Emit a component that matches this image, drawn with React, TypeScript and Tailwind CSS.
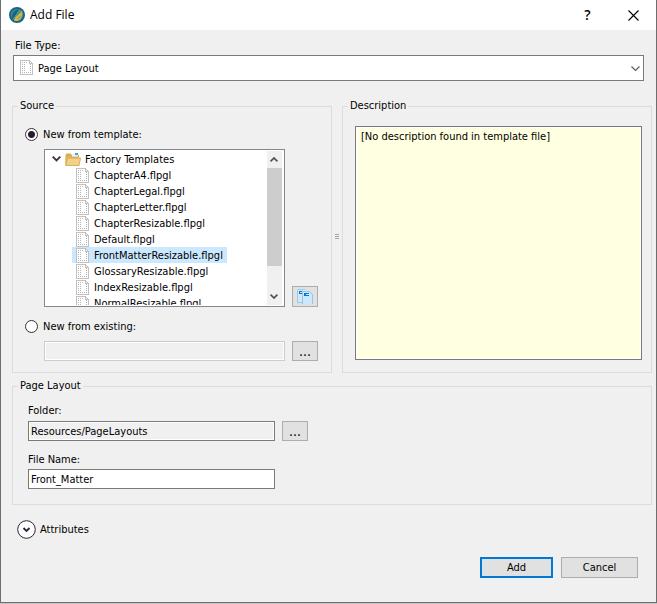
import { ReactNode, useState } from 'react'

const TEMPLATES = [
  'ChapterA4.flpgl',
  'ChapterLegal.flpgl',
  'ChapterLetter.flpgl',
  'ChapterResizable.flpgl',
  'Default.flpgl',
  'FrontMatterResizable.flpgl',
  'GlossaryResizable.flpgl',
  'IndexResizable.flpgl',
  'NormalResizable.flpgl',
]

type SourceMode = 'template' | 'existing'

export default function App() {
  const [mode, setMode] = useState<SourceMode>('template')
  const [selected, setSelected] = useState('FrontMatterResizable.flpgl')
  const [fileName, setFileName] = useState('Front_Matter')

  return (
    <div className="min-h-screen bg-[#c3c3c3] pb-px font-['DejaVu_Sans_Condensed','DejaVu_Sans',sans-serif] text-[11px] leading-[14px] text-black">
      <div className="flex min-h-[calc(100vh-1px)] flex-col border border-t-0 border-[#6e6e6e] bg-[#f0f0f0]">
        <TitleBar />
        <main className="flex flex-1 flex-col pt-[9px]">
          <div className="px-3">
            <label htmlFor="file-type" className="block pl-0.5">
              File Type:
            </label>
            <FileTypeSelect />
          </div>

          <div className="mt-[18px] flex pr-1 pl-[11px]">
            <GroupBox title="Source" className="flex-[320]">
              <div className="pt-[14px] pr-[13px] pb-[11px] pl-3">
                <SourceRadio
                  id="from-template"
                  label="New from template:"
                  checked={mode === 'template'}
                  onChange={() => setMode('template')}
                />
                <div className="mt-[7px] flex items-end gap-[7px] pl-[19px]">
                  <TemplateTree selected={selected} onSelect={setSelected} />
                  <SmallButton label="Browse template folder">
                    <TemplatesIcon />
                  </SmallButton>
                </div>
                <div className="mt-3">
                  <SourceRadio
                    id="from-existing"
                    label="New from existing:"
                    checked={mode === 'existing'}
                    onChange={() => setMode('existing')}
                  />
                </div>
                <div className="mt-[7px] flex gap-[7px] pl-[19px]">
                  <input
                    type="text"
                    aria-label="Existing file"
                    disabled={mode !== 'existing'}
                    className="h-5 min-w-0 flex-1 border border-[#ccc] bg-[#f0f0f0] px-0.5 outline-1 -outline-offset-2 outline-white"
                  />
                  <SmallButton label="Browse existing file">
                    <Dots />
                  </SmallButton>
                </div>
              </div>
            </GroupBox>

            <div className="flex w-[10px] flex-col items-center justify-center gap-px">
              <span className="h-px w-1 bg-[#a6a6a6]" />
              <span className="h-px w-1 bg-[#a6a6a6]" />
              <span className="h-px w-1 bg-[#a6a6a6]" />
            </div>

            <GroupBox title="Description" className="flex flex-[310] flex-col">
              <div className="flex flex-1 flex-col pt-[13px] pr-[9px] pb-3 pl-3">
                <textarea
                  readOnly
                  aria-label="Description"
                  defaultValue="[No description found in template file]"
                  className="w-full flex-1 resize-none border border-[#7a7a7a] bg-[#ffffe1] px-[5px] py-[3px] outline-1 -outline-offset-2 outline-white"
                />
              </div>
            </GroupBox>
          </div>

          <div className="mt-[6px] pr-1 pl-[11px]">
            <GroupBox title="Page Layout">
              <div className="px-[15px] pt-[11px] pb-[15px]">
                <label htmlFor="folder" className="block">
                  Folder:
                </label>
                <div className="mt-[3px] flex items-center gap-[7px]">
                  <input
                    id="folder"
                    type="text"
                    readOnly
                    defaultValue="Resources/PageLayouts"
                    className="h-5 w-[247px] border border-[#7a7a7a] bg-[#f0f0f0] px-0.5 outline-1 -outline-offset-2 outline-white"
                  />
                  <SmallButton label="Browse folder">
                    <Dots />
                  </SmallButton>
                </div>
                <label htmlFor="file-name" className="mt-3 block">
                  File Name:
                </label>
                <input
                  id="file-name"
                  type="text"
                  value={fileName}
                  onChange={(e) => setFileName(e.target.value)}
                  className="mt-0.5 block h-5 w-[247px] border border-[#7a7a7a] bg-white px-0.5 outline-none"
                />
              </div>
            </GroupBox>
          </div>

          <button type="button" className="mt-[15px] ml-4 flex items-center gap-1 self-start">
            <svg width="19" height="19" viewBox="0 0 19 19" fill="none">
              <circle cx="9.5" cy="9.5" r="8.8" fill="#fff" stroke="#2d2438" />
              <path d="M6.5 8l3 3 3-3" stroke="#2d2438" strokeWidth="1.8" />
            </svg>
            Attributes
          </button>

          <div className="mt-auto flex justify-end gap-2 pt-4 pr-[18px] pb-6">
            <button type="button" className="h-[21px] w-[73px] border-2 border-[#0078d7] bg-[#e1e1e1]">
              Add
            </button>
            <button type="button" className="h-[21px] w-[77px] border border-[#adadad] bg-[#e1e1e1]">
              Cancel
            </button>
          </div>
        </main>
      </div>
    </div>
  )
}

function TitleBar() {
  return (
    <header className="flex h-[30px] items-center bg-white pl-2">
      <AppIcon />
      <h1 className="ml-[5px] flex-1 font-['Open_Sans',sans-serif] text-xs leading-4">Add File</h1>
      <button
        type="button"
        aria-label="Help"
        className="flex h-full w-[45px] items-center justify-center font-['Open_Sans',sans-serif] text-sm font-semibold"
      >
        ?
      </button>
      <button type="button" aria-label="Close" className="flex h-full w-[46px] items-center justify-center">
        <svg width="11" height="11" viewBox="0 0 11 11" stroke="#000" strokeWidth="1.1">
          <path d="M.5.5l10 10M10.5.5l-10 10" />
        </svg>
      </button>
    </header>
  )
}

function FileTypeSelect() {
  return (
    <div className="relative mt-0.5">
      <select
        id="file-type"
        className="block h-[26px] w-full appearance-none border border-[#7a7a7a] bg-white pt-0.5 pr-6 pl-6 outline-none"
      >
        <option>Page Layout</option>
      </select>
      <span className="pointer-events-none absolute top-[5px] left-[7px]">
        <PageIcon />
      </span>
      <svg
        className="pointer-events-none absolute top-[11px] right-1"
        width="9"
        height="6"
        viewBox="0 0 9 6"
        fill="none"
        stroke="#606060"
        strokeWidth="1.2"
      >
        <path d="M.5.5l4 4 4-4" />
      </svg>
    </div>
  )
}

function GroupBox({ title, className = '', children }: { title: string; className?: string; children: ReactNode }) {
  return (
    <fieldset className={`min-w-0 border border-[#dcdcdc] ${className}`}>
      <legend className="ml-[5px] px-0.5">{title}</legend>
      {children}
    </fieldset>
  )
}

function SourceRadio({
  id,
  label,
  checked,
  onChange,
}: {
  id: string
  label: string
  checked: boolean
  onChange: () => void
}) {
  return (
    <div className="flex items-center gap-[5px]">
      <input
        id={id}
        type="radio"
        name="source"
        checked={checked}
        onChange={onChange}
        className="size-[13px] appearance-none rounded-full border border-[#333] bg-white checked:bg-[radial-gradient(circle,#2a1a2e_0_3px,#fff_4px)]"
      />
      <label htmlFor={id} className="pt-px">
        {label}
      </label>
    </div>
  )
}

function TemplateTree({ selected, onSelect }: { selected: string; onSelect: (name: string) => void }) {
  return (
    <div className="flex h-[158px] min-w-0 flex-1 border border-[#828790] bg-white p-px">
      <div role="tree" aria-label="Templates" className="min-w-0 flex-1 overflow-hidden">
        <div role="treeitem" aria-expanded="true" className="flex h-4 items-center pl-[6px]">
          <svg width="9" height="6" viewBox="0 0 9 6" fill="none" stroke="#40333f" strokeWidth="1.9">
            <path d="M.7.7l3.800 3.800L8.300.7" />
          </svg>
          <span className="ml-1">
            <FolderIcon />
          </span>
          <span className="ml-1 pt-0.5">Factory Templates</span>
        </div>
        {TEMPLATES.map((name) => (
          <button
            key={name}
            type="button"
            role="treeitem"
            aria-selected={name === selected}
            onClick={() => onSelect(name)}
            className={`ml-[26px] flex h-4 items-center gap-[5px] pr-1 pl-1 whitespace-nowrap ${
              name === selected ? 'bg-[#cce8ff]' : ''
            }`}
          >
            <PageIcon />
            <span className="pt-0.5">{name}</span>
          </button>
        ))}
      </div>
      <div className="mr-px flex w-[15px] flex-col items-center bg-[#f0f0f0]">
        <svg className="my-[6px]" width="8" height="5" viewBox="0 0 8 5" fill="none" stroke="#505050" strokeWidth="1.7">
          <path d="M.6 4.4L4 1l3.4 3.4" />
        </svg>
        <div className="h-[98px] w-full bg-[#cdcdcd]" />
        <svg
          className="mt-auto mb-[6px]"
          width="8"
          height="5"
          viewBox="0 0 8 5"
          fill="none"
          stroke="#505050"
          strokeWidth="1.7"
        >
          <path d="M.6.6L4 4 7.4.6" />
        </svg>
      </div>
    </div>
  )
}

function SmallButton({ label, children }: { label: string; children: ReactNode }) {
  return (
    <button
      type="button"
      aria-label={label}
      className="flex min-h-5 w-[26px] shrink-0 items-center justify-center border border-[#adadad] bg-[#e1e1e1]"
    >
      {children}
    </button>
  )
}

function Dots() {
  return <span className="text-sm leading-4">...</span>
}

function PageIcon() {
  return (
    <svg className="shrink-0" width="13" height="15" viewBox="0 0 13 15" fill="none" shapeRendering="crispEdges">
      <path d="M.5.5h9l3 3v11H.5z" fill="#fff" stroke="#c0c0c0" />
      <path d="M9.500 0v3.500h3" stroke="#c0c0c0" />
      <path d="M2 2.500h6M2 12.500h9" stroke="#b4b4b4" strokeDasharray="1 1" />
      <path d="M2.500 2v11M4.500 4v9M10.500 4v9" stroke="#b4b4b4" strokeDasharray="1 1" />
    </svg>
  )
}

function FolderIcon() {
  return (
    <svg width="16" height="13" viewBox="0 0 16 13">
      <path d="M.5 2l1-1.500h4L7 2h7v9H.5z" fill="#d9a94a" />
      <path d="M7 1h6v3H7z" fill="#e8f4fb" />
      <path d="M10 0h3v2h-3z" fill="#3f9ed8" />
      <path d="M.5 3.500H14V12H.5z" fill="#e6bc66" />
      <path d="M2.500 5h13L14 12.500H.7z" fill="#f3d288" stroke="#cf9f45" strokeWidth=".8" />
    </svg>
  )
}

function TemplatesIcon() {
  return (
    <svg width="16" height="19" viewBox="0 -2 16 19" shapeRendering="crispEdges">
      <path d="M0 1h8v13H0z" fill="#cfe8fc" />
      <path d="M0 1h1v13H0zM1 0h7v1H1zM0 13h5v1H0z" fill="#9ccbe6" />
      <path d="M2 2h3v1H3v1h2v1H2z" fill="#0078d7" />
      <path d="M5 2h8l3 3v10H5z" fill="#cce8ff" />
      <path d="M5 2h1v13H5zM6 2h7v1H6zM13 3h1v1h-1zM14 4h1v1h-1zM15 5h1v10h-1z" fill="#9cc4dc" />
      <path d="M7 4h5v3H7z" fill="#0078d7" />
      <path d="M9 5h3v1H9z" fill="#cce8ff" />
    </svg>
  )
}

function AppIcon() {
  return (
    <svg width="16" height="16" viewBox="0 0 16 16">
      <circle cx="8" cy="8" r="8" fill="#1d5f86" />
      <circle cx="8" cy="8" r="6.300" fill="#2f8c86" />
      <path d="M3 11C3 6 6 3 10 2 8 5 8 8 4.500 13z" fill="#1d5f86" />
      <path d="M5 13.500C6 9 10 8 13 3.500c1 4 0 9-4.500 10.500-1.500.3-2.500 0-3.500-.5z" fill="#d3b34c" />
      <path d="M4 12.500C6 9 9 6 11 3" fill="none" stroke="#6fb3a0" strokeWidth=".8" />
      <path d="M9 11.500l2.500-2" stroke="#2a8583" strokeWidth=".6" />
    </svg>
  )
}
